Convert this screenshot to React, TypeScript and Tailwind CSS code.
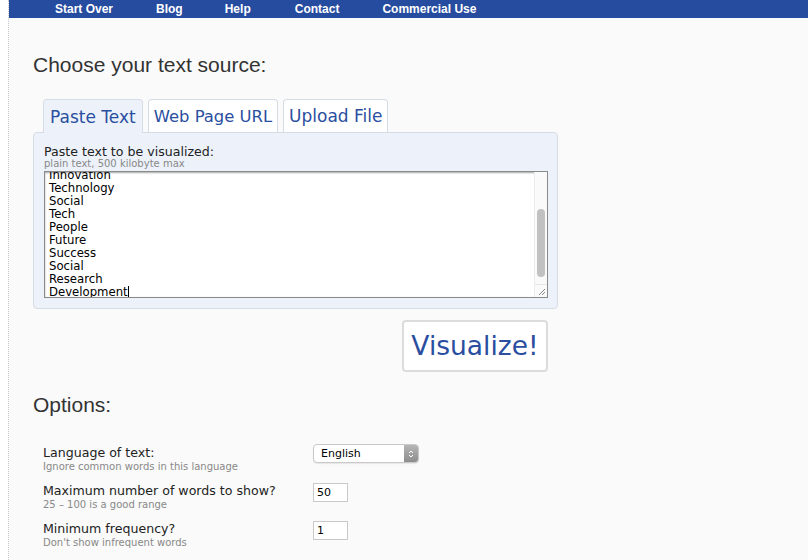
const words = [
  "Innovation",
  "Technology",
  "Social",
  "Tech",
  "People",
  "Future",
  "Success",
  "Social",
  "Research",
  "Development",
];

function Nav() {
  return (
    <div className="h-[18px] bg-[#264ca0] flex items-center pl-[46px] gap-[44px] text-white font-bold text-[12px] leading-none font-['Liberation_Sans',Arial,sans-serif]">
      <span>Start Over</span>
      <span className="-ml-[1px]">Blog</span>
      <span className="-ml-[2px]">Help</span>
      <span>Contact</span>
      <span className="-ml-[1px]">Commercial Use</span>
    </div>
  );
}

function Option({ label, hint, children }: { label: string; hint: string; children: React.ReactNode }) {
  return (
    <div className="flex h-[38px]">
      <div className="w-[270px]">
        <p className="text-[12.6px] leading-[15px] text-[#222]">{label}</p>
        <p className="text-[10px] leading-[13px] text-[#888]">{hint}</p>
      </div>
      <div>{children}</div>
    </div>
  );
}

const heading = "text-[21px] leading-[26px] text-[#333] font-['Liberation_Sans',Arial,sans-serif]";

export default function App() {
  return (
    <div className="w-[808px] h-[560px] overflow-hidden bg-white pl-[8px] font-['DejaVu_Sans',sans-serif]">
      <div className="h-full bg-[#fafafa] border-l border-dotted border-[#c8c8c8]">
        <Nav />
        <section className="pl-[24px]">
          <h1 className={`mt-[34px] ${heading}`}>Choose your text source:</h1>

          <div className="mt-[20px] ml-[10px] flex gap-[5px] items-end">
            <div className="h-[34px] px-[6px] pt-[2px] flex items-center bg-[#edf2fa] border border-b-0 border-[#d6dce6] rounded-t-[4px] text-[17px] text-[#2a4ea0] relative top-[1px]">
              Paste Text
            </div>
            <div className="h-[33px] px-[5px] pt-[2px] flex items-center bg-white border border-b-0 border-[#d6dce6] rounded-t-[4px] text-[16.4px] text-[#2a4ea0]">
              Web Page URL
            </div>
            <div className="h-[33px] px-[5px] pt-[2px] flex items-center bg-white border border-b-0 border-[#d6dce6] rounded-t-[4px] text-[17px] text-[#2a4ea0]">
              Upload File
            </div>
          </div>

          <div className="w-[525px] h-[177px] bg-[#edf2fa] border border-[#d6dce6] rounded-[4px] px-[10px] pt-[11px]">
            <p className="text-[12.6px] leading-[15px] text-[#222]">Paste text to be visualized:</p>
            <p className="text-[10px] leading-[10px] text-[#888]">plain text, 500 kilobyte max</p>
            <div className="mt-[2px] w-[504px] h-[127px] bg-white border border-[#8a8a8a] shadow-[inset_0_1px_2px_rgba(0,0,0,0.35)] flex overflow-hidden">
              <div className="flex-1 pl-[4px] -mt-[3px] text-[11.7px] leading-[13px] text-black">
                {words.map((w, i) => (
                  <div key={i}>
                    {w}
                    {i === words.length - 1 && <span className="inline-block w-px h-[13px] bg-black align-top" />}
                  </div>
                ))}
              </div>
              <div className="w-[13px] bg-[#fafafa] border-l border-[#ececec] flex flex-col">
                <div className="h-[37px]" />
                <div className="mx-auto w-[8px] h-[68px] rounded-full bg-[#c1c1c1]" />
                <div className="flex-1" />
                <div className="h-[13px] border-t border-[#e5e5e5] relative">
                  <svg width="12" height="12" viewBox="0 0 12 12" className="absolute right-0 bottom-0">
                    <path d="M10 4 L4 10 M10 7 L7 10" stroke="#888" strokeWidth="1" />
                  </svg>
                </div>
              </div>
            </div>
          </div>

          <div className="w-[515px] flex justify-end mt-[11px]">
            <button className="w-[146px] h-[52px] bg-white border-2 border-[#dcdcdc] rounded-[4px] text-[26.5px] text-[#2a4ea0] leading-none">
              Visualize!
            </button>
          </div>

          <h2 className={`mt-[20px] ${heading}`}>Options:</h2>

          <div className="mt-[27px] pl-[10px]">
            <Option label="Language of text:" hint="Ignore common words in this language">
              <div className="mt-[-1px] w-[106px] h-[19px] border border-[#c9c9c9] rounded-[4px] bg-white flex text-[11px] text-black shadow-[0_1px_1px_rgba(0,0,0,0.08)] overflow-hidden">
                <span className="flex-1 pl-[7px] leading-[17px]">English</span>
                <span className="w-[14px] bg-gradient-to-b from-[#b5b5b5] to-[#8e8e8e] flex flex-col items-center justify-center">
                  <svg width="6" height="10" viewBox="0 0 6 10">
                    <path d="M1 4 L3 2 L5 4 M1 6 L3 8 L5 6" stroke="#fff" strokeWidth="1" fill="none" />
                  </svg>
                </span>
              </div>
            </Option>
            <Option label="Maximum number of words to show?" hint="25 – 100 is a good range">
              <div className="w-[35px] h-[19px] bg-white border border-[#c9c9c9] text-[11px] leading-[17px] pl-[3px] text-black">50</div>
            </Option>
            <Option label="Minimum frequency?" hint="Don't show infrequent words">
              <div className="w-[35px] h-[19px] bg-white border border-[#c9c9c9] text-[11px] leading-[17px] pl-[3px] text-black">1</div>
            </Option>
          </div>
        </section>
      </div>
    </div>
  );
}
